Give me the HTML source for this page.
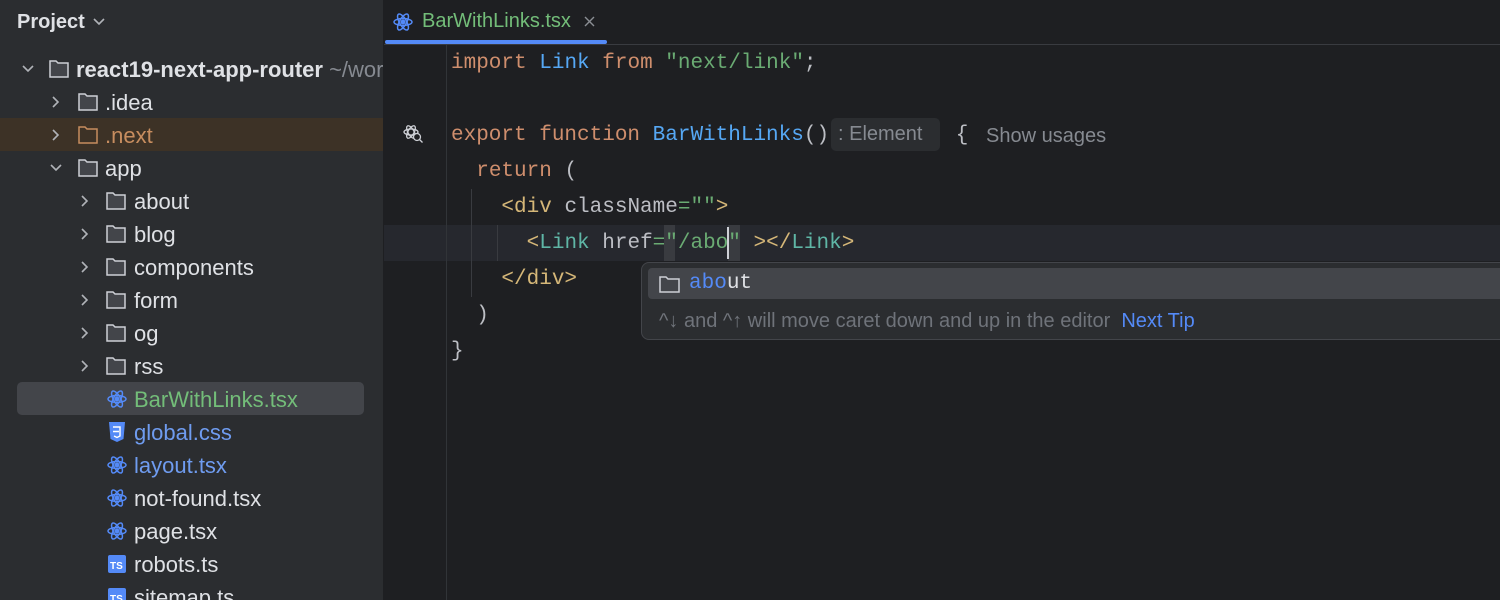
<!DOCTYPE html>
<html><head><meta charset="utf-8"><style>
*{margin:0;padding:0;box-sizing:border-box}
body{width:1500px;height:600px;background:#1e1f22;overflow:hidden;position:relative;font-family:"Liberation Sans",sans-serif}
.side{position:absolute;left:0;top:0;width:383px;height:600px;background:#2b2d30;overflow:hidden}
.sep{position:absolute;left:383px;top:0;width:1px;height:600px;background:#1e1f22}
.t{position:absolute;font-size:22px;color:#dfe1e5;white-space:nowrap;line-height:33px}
.row{position:absolute;left:0;width:383px;height:33px}
.code{position:absolute;font-family:"Liberation Mono",monospace;font-size:21px;white-space:pre;line-height:36px;color:#bcbec4}
.kw{color:#cf8e6d}.fn{color:#56a8f5}.tag{color:#d5b778}.str{color:#6aab73}.cmp{color:#5fb6a6}
</style></head><body>
<div class="side">
  <div class="t" style="left:17px;top:6px;font-weight:bold;font-size:20px">Project</div>
  <svg style="position:absolute;left:93px;top:18px" width="12" height="8"><path d="M1 1l5 5 5-5" stroke="#b0b3b8" stroke-width="1.6" fill="none"/></svg>
  <div class="row" style="top:118px;background:#3d3226"></div>
  <div style="position:absolute;left:17px;top:382px;width:347px;height:33px;background:#43454a;border-radius:5px"></div>
  <svg width="383" height="600" style="position:absolute;left:0;top:0">
    <g stroke="#b0b3b8" stroke-width="1.6" fill="none">
      <path d="M23 66l5 5 5-5"/>
      <path d="M53 97l5 5-5 5"/>
      <path d="M53 130l5 5-5 5" stroke="#b0b3b8"/>
      <path d="M51 165l5 5 5-5"/>
      <path d="M82 196l5 5-5 5"/><path d="M82 229l5 5-5 5"/><path d="M82 262l5 5-5 5"/><path d="M82 295l5 5-5 5"/><path d="M82 328l5 5-5 5"/><path d="M82 361l5 5-5 5"/>
    </g>
    <g fill="#43454a" stroke="#ced0d6" stroke-width="1.5">
      <path d="M50 61h6l2 2h10v14h-18z"/>
      <path d="M79 94h6l2 2h10v14h-18z"/>
      <path d="M79 127h6l2 2h10v14h-18z" stroke="#c78d5f" fill="#3d3226"/>
      <path d="M79 160h6l2 2h10v14h-18z"/>
      <path d="M107 193h6l2 2h10v14h-18z"/><path d="M107 226h6l2 2h10v14h-18z"/><path d="M107 259h6l2 2h10v14h-18z"/><path d="M107 292h6l2 2h10v14h-18z"/><path d="M107 325h6l2 2h10v14h-18z"/><path d="M107 358h6l2 2h10v14h-18z"/>
    </g>
    <g stroke="#548af7" stroke-width="1.5" fill="none">
      <g transform="translate(117,399)"><ellipse rx="9" ry="3.5"/><ellipse rx="9" ry="3.5" transform="rotate(60)"/><ellipse rx="9" ry="3.5" transform="rotate(-60)"/><circle r="1.8" fill="#548af7"/></g>
      <g transform="translate(117,465)"><ellipse rx="9" ry="3.5"/><ellipse rx="9" ry="3.5" transform="rotate(60)"/><ellipse rx="9" ry="3.5" transform="rotate(-60)"/><circle r="1.8" fill="#548af7"/></g>
      <g transform="translate(117,498)"><ellipse rx="9" ry="3.5"/><ellipse rx="9" ry="3.5" transform="rotate(60)"/><ellipse rx="9" ry="3.5" transform="rotate(-60)"/><circle r="1.8" fill="#548af7"/></g>
      <g transform="translate(117,531)"><ellipse rx="9" ry="3.5"/><ellipse rx="9" ry="3.5" transform="rotate(60)"/><ellipse rx="9" ry="3.5" transform="rotate(-60)"/><circle r="1.8" fill="#548af7"/></g>
    </g>
    <path d="M109 422h16l-1.5 17-6.5 3-6.5-3z" fill="#548af7"/>
    <path d="M113 427h7v9l-3 1.5-3-1.5M113 431.5h6" stroke="#fff" stroke-width="1.4" fill="none"/>
    <rect x="108" y="555" width="18" height="18" rx="2" fill="#548af7"/>
    <text x="110" y="569" font-size="10" font-weight="bold" fill="#fff" font-family="Liberation Sans">TS</text>
    <rect x="108" y="588" width="18" height="18" rx="2" fill="#548af7"/>
    <text x="110" y="602" font-size="10" font-weight="bold" fill="#fff" font-family="Liberation Sans">TS</text>
  </svg>
  <div class="t" style="left:76px;top:53px;font-weight:bold">react19-next-app-router <span style="font-weight:normal;color:#868a91">~/work</span></div>
  <div class="t" style="left:105px;top:86px">.idea</div>
  <div class="t" style="left:105px;top:119px;color:#c78d5f">.next</div>
  <div class="t" style="left:105px;top:152px">app</div>
  <div class="t" style="left:134px;top:185px">about</div>
  <div class="t" style="left:134px;top:218px">blog</div>
  <div class="t" style="left:134px;top:251px">components</div>
  <div class="t" style="left:134px;top:284px">form</div>
  <div class="t" style="left:134px;top:317px">og</div>
  <div class="t" style="left:134px;top:350px">rss</div>
  <div class="t" style="left:134px;top:383px;color:#73bd79">BarWithLinks.tsx</div>
  <div class="t" style="left:134px;top:416px;color:#6f9cf0">global.css</div>
  <div class="t" style="left:134px;top:449px;color:#6f9cf0">layout.tsx</div>
  <div class="t" style="left:134px;top:482px">not-found.tsx</div>
  <div class="t" style="left:134px;top:515px">page.tsx</div>
  <div class="t" style="left:134px;top:548px">robots.ts</div>
  <div class="t" style="left:134px;top:581px">sitemap.ts</div>
</div>
<div class="sep"></div>
<div style="position:absolute;left:384px;top:44px;width:1116px;height:1px;background:#393b40"></div>
<svg style="position:absolute;left:392px;top:11px" width="22" height="22"><g transform="translate(11,11)" stroke="#548af7" stroke-width="1.5" fill="none"><ellipse rx="9" ry="3.5"/><ellipse rx="9" ry="3.5" transform="rotate(60)"/><ellipse rx="9" ry="3.5" transform="rotate(-60)"/><circle r="1.8" fill="#548af7"/></g></svg>
<div class="t" style="left:422px;top:5px;color:#73bd79;font-size:20px">BarWithLinks.tsx</div>
<svg style="position:absolute;left:584px;top:16px" width="11" height="11"><path d="M1 1l9 9M10 1l-9 9" stroke="#8b8e94" stroke-width="1.4"/></svg>
<div style="position:absolute;left:385px;top:40px;width:222px;height:4px;background:#548af7;border-radius:2px"></div>
<div style="position:absolute;left:384px;top:225px;width:1116px;height:36px;background:#26282e"></div>
<div style="position:absolute;left:446px;top:45px;width:1px;height:555px;background:#313438"></div>
<div style="position:absolute;left:471px;top:189px;width:1px;height:108px;background:#393b40"></div>
<div style="position:absolute;left:497px;top:225px;width:1px;height:36px;background:#393b40"></div>
<div style="position:absolute;left:664px;top:225px;width:11px;height:36px;background:#393b40"></div>
<div style="position:absolute;left:728px;top:225px;width:12px;height:36px;background:#393b40"></div>
<svg style="position:absolute;left:403px;top:124px" width="22" height="20"><g stroke="#ced0d6" stroke-width="1.3" fill="none"><ellipse cx="8" cy="8" rx="7" ry="3"/><ellipse cx="8" cy="8" rx="7" ry="3" transform="rotate(60 8 8)"/><ellipse cx="8" cy="8" rx="7" ry="3" transform="rotate(-60 8 8)"/><circle cx="14" cy="13" r="3.5" fill="#1e1f22"/><path d="M16.5 15.5l3 3"/></g></svg>
<div class="code" style="left:451px;top:46px"><span class="kw">import</span> <span class="fn">Link</span> <span class="kw">from</span> <span class="str">"next/link"</span>;

<span class="kw">export function</span> <span class="fn">BarWithLinks</span>()<span style="display:inline-block;width:114px"></span> {
  <span class="kw">return</span> (
    <span class="tag">&lt;div</span> className<span class="str">=""</span><span class="tag">&gt;</span>
      <span class="tag">&lt;</span><span class="cmp">Link</span> href<span class="str">="/abo"</span> <span class="tag">&gt;&lt;/</span><span class="cmp">Link</span><span class="tag">&gt;</span>
    <span class="tag">&lt;/div&gt;</span>
  )
}</div>
<div style="position:absolute;left:727px;top:227px;width:2px;height:32px;background:#ced0d6"></div>
<div style="position:absolute;left:831px;top:118px;width:109px;height:33px;background:#2b2d30;border-radius:5px"></div>
<div class="t" style="left:838px;top:118px;color:#868a91;font-size:20px">: Element</div>
<div class="t" style="left:986px;top:120px;color:#868a91;font-size:20px">Show usages</div>
<div style="position:absolute;left:641px;top:262px;width:870px;height:78px;background:#2b2d30;border:1px solid #43454a;border-radius:8px"></div>
<div style="position:absolute;left:648px;top:268px;width:860px;height:31px;background:#43454a;border-radius:4px"></div>
<svg style="position:absolute;left:658px;top:274px" width="24" height="20"><path d="M2 3h6l2 2h11v13h-19z" fill="none" stroke="#ced0d6" stroke-width="1.5"/></svg>
<div class="code" style="left:689px;top:266px;line-height:36px"><span style="color:#548af7">abo</span><span style="color:#dfe1e5">ut</span></div>
<div class="t" style="left:659px;top:305px;color:#6f737a;font-size:20px">^↓ and ^↑ will move caret down and up in the editor &nbsp;<span style="color:#548af7">Next Tip</span></div>
</body></html>
